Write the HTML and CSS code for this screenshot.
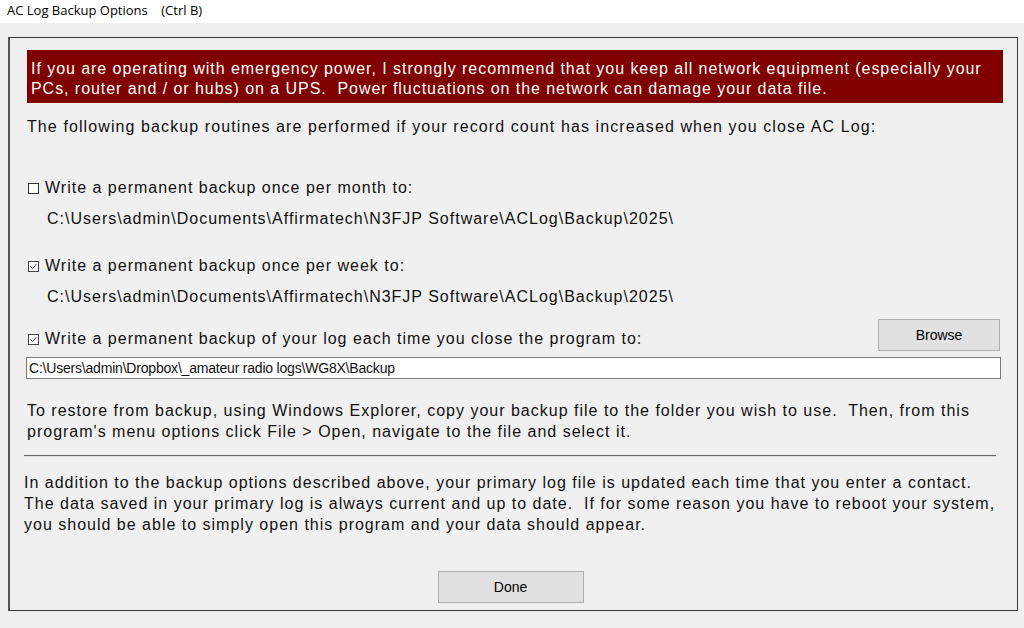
FILE: index.html
```html
<!DOCTYPE html>
<html>
<head>
<meta charset="utf-8">
<link rel="stylesheet" href="styles.css">
</head>
<body>
<div class="titlebar">AC Log Backup Options&nbsp;&nbsp;&nbsp;&nbsp;(Ctrl B)</div>
<div class="client">
  <div class="frame">
    <div class="warning">If you are operating with emergency power, I strongly recommend that you keep all network equipment (especially your<br>PCs, router and / or hubs) on a UPS.&nbsp; Power fluctuations on the network can damage your data file.</div>
    <p class="intro">The following backup routines are performed if your record count has increased when you close AC Log:</p>
    <div class="opt opt1"><svg class="cb" width="11" height="11" viewBox="0 0 11 11"><rect x="0.5" y="0.5" width="10" height="10" fill="#fff" stroke="#333"/></svg>Write a permanent backup once per month to:</div>
    <div class="path">C:\Users\admin\Documents\Affirmatech\N3FJP Software\ACLog\Backup\2025\</div>
    <div class="opt opt2"><svg class="cb" width="11" height="11" viewBox="0 0 11 11"><rect x="0.5" y="0.5" width="10" height="10" fill="#fff" stroke="#444"/><path d="M2.5 5.5 L4.5 7.5 L8.5 3" fill="none" stroke="#444" stroke-width="1"/></svg>Write a permanent backup once per week to:</div>
    <div class="path">C:\Users\admin\Documents\Affirmatech\N3FJP Software\ACLog\Backup\2025\</div>
    <div class="row3">
      <div class="opt opt3"><svg class="cb" width="11" height="11" viewBox="0 0 11 11"><rect x="0.5" y="0.5" width="10" height="10" fill="#fff" stroke="#444"/><path d="M2.5 5.5 L4.5 7.5 L8.5 3" fill="none" stroke="#444" stroke-width="1"/></svg>Write a permanent backup of your log each time you close the program to:</div>
      <button class="btn browse">Browse</button>
    </div>
    <div class="input">C:\Users\admin\Dropbox\_amateur radio logs\WG8X\Backup</div>
    <p class="restore">To restore from backup, using Windows Explorer, copy your backup file to the folder you wish to use.&nbsp; Then, from this<br>program's menu options click File &gt; Open, navigate to the file and select it.</p>
    <div class="rule"></div>
    <p class="addition">In addition to the backup options described above, your primary log file is updated each time that you enter a contact.<br>The data saved in your primary log is always current and up to date.&nbsp; If for some reason you have to reboot your system,<br>you should be able to simply open this program and your data should appear.</p>
    <div class="footer"><button class="btn done">Done</button></div>
  </div>
</div>
</body>
</html>
```
FILE: styles.css
```css
html, body {
  margin: 0;
  padding: 0;
  width: 1024px;
  height: 628px;
  overflow: hidden;
  background: #f0f0f0;
  font-family: "Liberation Sans", Arial, sans-serif;
  color: #000;
}
.titlebar {
  height: 23px;
  background: #fff;
  font-family: "Open Sans", "Noto Sans", sans-serif;
  font-size: 13px;
  line-height: 21px;
  padding-left: 7px;
  color: #000;
}
.client {
  padding: 14px 6px 0 8px;
}
.frame {
  height: 574px;
  box-sizing: border-box;
  border: 1px solid #3a3a3a;
  border-left: 2px solid #555;
  padding: 12px 14px 0 17px;
  display: flex;
  flex-direction: column;
  font-size: 16px;
  letter-spacing: 1px;
  white-space: nowrap;
  color: #111;
}
.warning {
  background: #800000;
  color: #fff;
  padding: 9px 4px 4px 4px;
  line-height: 20px;
  width: 976px;
  box-sizing: border-box;
  letter-spacing: 0.95px;
}
.intro {
  margin: 14px 0 0 0;
  line-height: 20px;
  letter-spacing: 1.1px;
}
.opt {
  line-height: 20px;
  display: flex;
  align-items: center;
}
.cb {
  margin: 0 6px 0 1px;
  flex: none;
}
.opt1 { margin-top: 41px; }
.opt2 { margin-top: 27px; }
.path {
  margin: 11px 0 0 20px;
  line-height: 20px;
}
.row3 {
  display: flex;
  justify-content: space-between;
  align-items: flex-end;
  margin-top: 12px;
  width: 976px;
  padding-right: 3px;
  box-sizing: border-box;
}
.opt3 { margin-bottom: 2px; }
.btn {
  font-family: "Liberation Sans", Arial, sans-serif;
  font-size: 14px;
  letter-spacing: 0;
  background: #e1e1e1;
  border: 1px solid #adadad;
  color: #000;
  padding: 0;
  box-sizing: border-box;
}
.browse {
  width: 122px;
  height: 32px;
}
.input {
  margin-top: 6px;
  margin-left: -1px;
  width: 975px;
  height: 22px;
  box-sizing: border-box;
  background: #fff;
  border: 1px solid #7a7a7a;
  font-size: 14px;
  line-height: 20px;
  padding-left: 2px;
  letter-spacing: -0.2px;
}
.restore {
  margin: 21px 0 0 0;
  line-height: 21px;
}
.rule {
  margin: 13px 0 0 -3px;
  width: 972px;
  height: 0;
  border-top: 1px solid #666;
  border-bottom: 1px solid #ddd;
}
.addition {
  margin: 15px 0 0 -3px;
  line-height: 21px;
}
.footer {
  margin-top: 36px;
  display: flex;
  justify-content: center;
  padding-right: 9px;
}
.done {
  width: 146px;
  height: 32px;
}
```
